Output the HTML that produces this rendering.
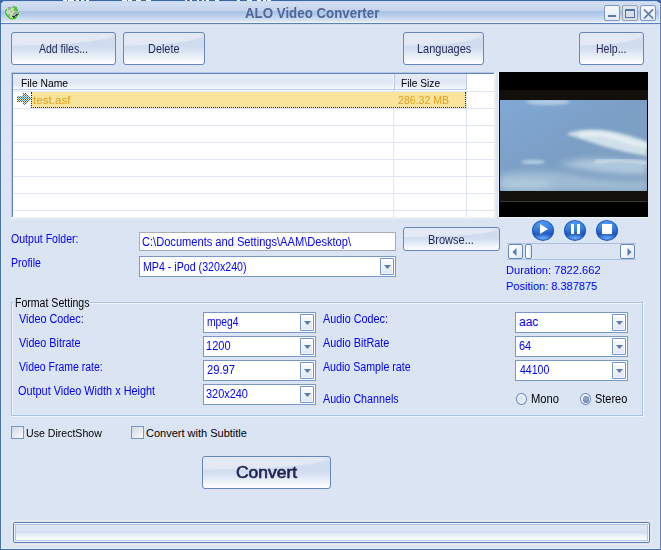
<!DOCTYPE html>
<html><head><meta charset="utf-8">
<style>
*{margin:0;padding:0;box-sizing:border-box}
html,body{width:661px;height:550px;overflow:hidden;background:#dae4f3}
body{position:relative;font-family:"Liberation Sans",sans-serif;font-size:11px;color:#000}
.a{position:absolute}
.t{position:absolute;white-space:pre;line-height:1}
.btn{position:absolute;border:1px solid #6787bb;border-radius:3px;overflow:hidden;
 background:radial-gradient(ellipse 102% 38% at 0% 4%,#e4eaf5 0%,#e2e9f4 93%,rgba(226,233,244,0) 100%),
 linear-gradient(to bottom,#d3def0 0%,#cfdbee 35%,#d3def0 50%,#e3eaf6 68%,#f1f5fb 85%,#fdfeff 100%)}
.btn .gl{display:none}
.combo{position:absolute;background:#fff;border:1px solid #7b97c6}
.combo .ar{position:absolute;right:1px;top:1px;bottom:1px;width:14px;border:1px solid #7191c4;border-radius:1px;
 background:linear-gradient(to bottom,#ffffff 0%,#f0f4fa 40%,#dde6f3 100%);box-shadow:inset 0 0 0 1px rgba(255,255,255,0.7)}
.combo .tri{position:absolute;left:3px;top:6px;width:7px;height:4px;background:#5a79ae;clip-path:polygon(0 0,100% 0,50% 100%)}
.chk{position:absolute;width:13px;height:13px;border:1px solid #7a96c4;background:linear-gradient(135deg,#cfd6e6 0%,#e6eaf3 50%,#fdfdfe 100%)}
</style></head><body>

<div class="a" style="left:0px;top:0px;width:661px;height:1px;background:#3b66a8"></div>
<div class="a" style="left:63px;top:0px;width:4px;height:1px;background:#f4f6fa"></div>
<div class="a" style="left:68px;top:0px;width:6px;height:1px;background:#f4f6fa"></div>
<div class="a" style="left:76px;top:0px;width:3px;height:1px;background:#f4f6fa"></div>
<div class="a" style="left:81px;top:0px;width:3px;height:1px;background:#f4f6fa"></div>
<div class="a" style="left:86px;top:0px;width:3px;height:1px;background:#f4f6fa"></div>
<div class="a" style="left:122px;top:0px;width:5px;height:1px;background:#f4f6fa"></div>
<div class="a" style="left:128px;top:0px;width:4px;height:1px;background:#f4f6fa"></div>
<div class="a" style="left:136px;top:0px;width:5px;height:1px;background:#f4f6fa"></div>
<div class="a" style="left:146px;top:0px;width:5px;height:1px;background:#f4f6fa"></div>
<div class="a" style="left:185px;top:0px;width:2px;height:1px;background:#f4f6fa"></div>
<div class="a" style="left:190px;top:0px;width:2px;height:1px;background:#f4f6fa"></div>
<div class="a" style="left:197px;top:0px;width:2px;height:1px;background:#f4f6fa"></div>
<div class="a" style="left:202px;top:0px;width:2px;height:1px;background:#f4f6fa"></div>
<div class="a" style="left:206px;top:0px;width:3px;height:1px;background:#f4f6fa"></div>
<div class="a" style="left:215px;top:0px;width:4px;height:1px;background:#f4f6fa"></div>
<div class="a" style="left:237px;top:0px;width:3px;height:1px;background:#f4f6fa"></div>
<div class="a" style="left:247px;top:0px;width:5px;height:1px;background:#f4f6fa"></div>
<div class="a" style="left:257px;top:0px;width:4px;height:1px;background:#f4f6fa"></div>
<div class="a" style="left:263px;top:0px;width:3px;height:1px;background:#f4f6fa"></div>
<div class="a" style="left:267px;top:0px;width:4px;height:1px;background:#f4f6fa"></div>
<div class="a" style="left:1px;top:25px;width:1px;height:523px;background:#e6edf8"></div>
<div class="a" style="left:1px;top:1px;width:658px;height:22px;background:linear-gradient(to bottom,#bccfea 0px,#d2def1 1px,#cbd9ef 6px,#c2d3ed 10px,#a9c2e6 10px,#b2c8e9 13px,#c3d4ee 16px,#d3e0f3 19px,#e2eaf7 21px,#eff4fb 21px)"></div>
<div class="a" style="left:0px;top:23px;width:661px;height:1px;background:#5c80b9"></div>
<div class="a" style="left:1px;top:24px;width:658px;height:1px;background:#d0dcef"></div>
<div class="a" style="left:0px;top:0px;width:1px;height:550px;background:#4570ad"></div>
<div class="a" style="left:659px;top:1px;width:1px;height:22px;background:#e2eaf6"></div>
<div class="a" style="left:659px;top:24px;width:1px;height:524px;background:#e2eaf6"></div>
<div class="a" style="left:660px;top:0px;width:1px;height:550px;background:#6383b8"></div>
<div class="a" style="left:657px;top:0px;width:4px;height:2px;background:#3b66a8"></div>
<div class="a" style="left:659px;top:0px;width:2px;height:3px;background:#3b66a8"></div>
<div class="a" style="left:0px;top:0px;width:3px;height:2px;background:#3b66a8"></div>
<div class="a" style="left:0px;top:0px;width:2px;height:3px;background:#3b66a8"></div>
<div class="a" style="left:0px;top:549px;width:661px;height:1px;background:#4570ad"></div>
<div class="a" style="left:1px;top:548px;width:658px;height:1px;background:#e8eef8"></div>
<div class="t" style="left:245.0px;top:6px;color:#4f6799;font-size:14px;font-weight:bold;transform:scaleX(0.9504);transform-origin:0 0">ALO Video Converter</div>
<svg class="a" style="left:4px;top:5px" width="16" height="16" shape-rendering="crispEdges"><rect x="5" y="1" width="1" height="1" fill="#d2d2dc"/><rect x="6" y="1" width="1" height="1" fill="#d2d2dc"/><rect x="7" y="1" width="1" height="1" fill="#d2d2dc"/><rect x="8" y="1" width="1" height="1" fill="#d2d2dc"/><rect x="9" y="1" width="1" height="1" fill="#48c438"/><rect x="10" y="1" width="1" height="1" fill="#48c438"/><rect x="3" y="2" width="1" height="1" fill="#b8ec80"/><rect x="4" y="2" width="1" height="1" fill="#a6a8b6"/><rect x="5" y="2" width="1" height="1" fill="#a6a8b6"/><rect x="6" y="2" width="1" height="1" fill="#a6a8b6"/><rect x="7" y="2" width="1" height="1" fill="#a6a8b6"/><rect x="8" y="2" width="1" height="1" fill="#a6a8b6"/><rect x="9" y="2" width="1" height="1" fill="#a6a8b6"/><rect x="10" y="2" width="1" height="1" fill="#48c438"/><rect x="11" y="2" width="1" height="1" fill="#48c438"/><rect x="12" y="2" width="1" height="1" fill="#48c438"/><rect x="2" y="3" width="1" height="1" fill="#b8ec80"/><rect x="3" y="3" width="1" height="1" fill="#b8ec80"/><rect x="4" y="3" width="1" height="1" fill="#a6a8b6"/><rect x="5" y="3" width="1" height="1" fill="#a6a8b6"/><rect x="6" y="3" width="1" height="1" fill="#a6a8b6"/><rect x="7" y="3" width="1" height="1" fill="#b8ec80"/><rect x="8" y="3" width="1" height="1" fill="#b8ec80"/><rect x="9" y="3" width="1" height="1" fill="#b8ec80"/><rect x="10" y="3" width="1" height="1" fill="#48c438"/><rect x="11" y="3" width="1" height="1" fill="#48c438"/><rect x="12" y="3" width="1" height="1" fill="#48c438"/><rect x="2" y="4" width="1" height="1" fill="#48c438"/><rect x="3" y="4" width="1" height="1" fill="#b8ec80"/><rect x="4" y="4" width="1" height="1" fill="#a6a8b6"/><rect x="5" y="4" width="1" height="1" fill="#a6a8b6"/><rect x="6" y="4" width="1" height="1" fill="#a6a8b6"/><rect x="7" y="4" width="1" height="1" fill="#b8ec80"/><rect x="8" y="4" width="1" height="1" fill="#b8ec80"/><rect x="9" y="4" width="1" height="1" fill="#b8ec80"/><rect x="10" y="4" width="1" height="1" fill="#48c438"/><rect x="11" y="4" width="1" height="1" fill="#48c438"/><rect x="12" y="4" width="1" height="1" fill="#48c438"/><rect x="13" y="4" width="1" height="1" fill="#48c438"/><rect x="1" y="5" width="1" height="1" fill="#48c438"/><rect x="2" y="5" width="1" height="1" fill="#48c438"/><rect x="3" y="5" width="1" height="1" fill="#b8ec80"/><rect x="4" y="5" width="1" height="1" fill="#b8ec80"/><rect x="5" y="5" width="1" height="1" fill="#d2d2dc"/><rect x="6" y="5" width="1" height="1" fill="#d2d2dc"/><rect x="7" y="5" width="1" height="1" fill="#d2d2dc"/><rect x="8" y="5" width="1" height="1" fill="#d2d2dc"/><rect x="9" y="5" width="1" height="1" fill="#a6a8b6"/><rect x="10" y="5" width="1" height="1" fill="#a6a8b6"/><rect x="11" y="5" width="1" height="1" fill="#a6a8b6"/><rect x="12" y="5" width="1" height="1" fill="#48c438"/><rect x="13" y="5" width="1" height="1" fill="#48c438"/><rect x="1" y="6" width="1" height="1" fill="#48c438"/><rect x="2" y="6" width="1" height="1" fill="#b8ec80"/><rect x="3" y="6" width="1" height="1" fill="#b8ec80"/><rect x="4" y="6" width="1" height="1" fill="#d2d2dc"/><rect x="5" y="6" width="1" height="1" fill="#d2d2dc"/><rect x="6" y="6" width="1" height="1" fill="#a6a8b6"/><rect x="7" y="6" width="1" height="1" fill="#a6a8b6"/><rect x="8" y="6" width="1" height="1" fill="#b8ec80"/><rect x="9" y="6" width="1" height="1" fill="#b8ec80"/><rect x="10" y="6" width="1" height="1" fill="#b8ec80"/><rect x="11" y="6" width="1" height="1" fill="#a6a8b6"/><rect x="12" y="6" width="1" height="1" fill="#a6a8b6"/><rect x="13" y="6" width="1" height="1" fill="#a6a8b6"/><rect x="14" y="6" width="1" height="1" fill="#d2d2dc"/><rect x="1" y="7" width="1" height="1" fill="#48c438"/><rect x="2" y="7" width="1" height="1" fill="#b8ec80"/><rect x="3" y="7" width="1" height="1" fill="#d2d2dc"/><rect x="4" y="7" width="1" height="1" fill="#d2d2dc"/><rect x="5" y="7" width="1" height="1" fill="#d2d2dc"/><rect x="6" y="7" width="1" height="1" fill="#d2d2dc"/><rect x="7" y="7" width="1" height="1" fill="#b8ec80"/><rect x="8" y="7" width="1" height="1" fill="#b8ec80"/><rect x="9" y="7" width="1" height="1" fill="#b8ec80"/><rect x="10" y="7" width="1" height="1" fill="#a6a8b6"/><rect x="11" y="7" width="1" height="1" fill="#a6a8b6"/><rect x="12" y="7" width="1" height="1" fill="#a6a8b6"/><rect x="13" y="7" width="1" height="1" fill="#a6a8b6"/><rect x="14" y="7" width="1" height="1" fill="#48c438"/><rect x="1" y="8" width="1" height="1" fill="#48c438"/><rect x="2" y="8" width="1" height="1" fill="#48c438"/><rect x="3" y="8" width="1" height="1" fill="#d2d2dc"/><rect x="4" y="8" width="1" height="1" fill="#d2d2dc"/><rect x="5" y="8" width="1" height="1" fill="#d2d2dc"/><rect x="6" y="8" width="1" height="1" fill="#d2d2dc"/><rect x="7" y="8" width="1" height="1" fill="#b8ec80"/><rect x="8" y="8" width="1" height="1" fill="#b8ec80"/><rect x="9" y="8" width="1" height="1" fill="#a6a8b6"/><rect x="10" y="8" width="1" height="1" fill="#a6a8b6"/><rect x="11" y="8" width="1" height="1" fill="#a6a8b6"/><rect x="12" y="8" width="1" height="1" fill="#a6a8b6"/><rect x="13" y="8" width="1" height="1" fill="#a6a8b6"/><rect x="14" y="8" width="1" height="1" fill="#48c438"/><rect x="2" y="9" width="1" height="1" fill="#48c438"/><rect x="3" y="9" width="1" height="1" fill="#a6a8b6"/><rect x="4" y="9" width="1" height="1" fill="#a6a8b6"/><rect x="5" y="9" width="1" height="1" fill="#a6a8b6"/><rect x="6" y="9" width="1" height="1" fill="#b8ec80"/><rect x="7" y="9" width="1" height="1" fill="#b8ec80"/><rect x="8" y="9" width="1" height="1" fill="#b8ec80"/><rect x="9" y="9" width="1" height="1" fill="#a6a8b6"/><rect x="10" y="9" width="1" height="1" fill="#a6a8b6"/><rect x="11" y="9" width="1" height="1" fill="#a6a8b6"/><rect x="12" y="9" width="1" height="1" fill="#3c3c44"/><rect x="13" y="9" width="1" height="1" fill="#3c3c44"/><rect x="14" y="9" width="1" height="1" fill="#48c438"/><rect x="2" y="10" width="1" height="1" fill="#48c438"/><rect x="3" y="10" width="1" height="1" fill="#48c438"/><rect x="4" y="10" width="1" height="1" fill="#a6a8b6"/><rect x="5" y="10" width="1" height="1" fill="#a6a8b6"/><rect x="6" y="10" width="1" height="1" fill="#b8ec80"/><rect x="7" y="10" width="1" height="1" fill="#b8ec80"/><rect x="8" y="10" width="1" height="1" fill="#a6a8b6"/><rect x="9" y="10" width="1" height="1" fill="#a6a8b6"/><rect x="10" y="10" width="1" height="1" fill="#a6a8b6"/><rect x="11" y="10" width="1" height="1" fill="#3c3c44"/><rect x="12" y="10" width="1" height="1" fill="#3c3c44"/><rect x="13" y="10" width="1" height="1" fill="#48c438"/><rect x="3" y="11" width="1" height="1" fill="#48c438"/><rect x="4" y="11" width="1" height="1" fill="#48c438"/><rect x="5" y="11" width="1" height="1" fill="#a6a8b6"/><rect x="6" y="11" width="1" height="1" fill="#b8ec80"/><rect x="7" y="11" width="1" height="1" fill="#b8ec80"/><rect x="8" y="11" width="1" height="1" fill="#3c3c44"/><rect x="9" y="11" width="1" height="1" fill="#3c3c44"/><rect x="10" y="11" width="1" height="1" fill="#3c3c44"/><rect x="11" y="11" width="1" height="1" fill="#48c438"/><rect x="12" y="11" width="1" height="1" fill="#48c438"/><rect x="4" y="12" width="1" height="1" fill="#48c438"/><rect x="5" y="12" width="1" height="1" fill="#48c438"/><rect x="6" y="12" width="1" height="1" fill="#b8ec80"/><rect x="7" y="12" width="1" height="1" fill="#b8ec80"/><rect x="8" y="12" width="1" height="1" fill="#b8ec80"/><rect x="9" y="12" width="1" height="1" fill="#3c3c44"/><rect x="10" y="12" width="1" height="1" fill="#3c3c44"/><rect x="11" y="12" width="1" height="1" fill="#48c438"/><rect x="12" y="12" width="1" height="1" fill="#48c438"/><rect x="5" y="13" width="1" height="1" fill="#48c438"/><rect x="6" y="13" width="1" height="1" fill="#48c438"/><rect x="7" y="13" width="1" height="1" fill="#48c438"/><rect x="8" y="13" width="1" height="1" fill="#48c438"/><rect x="9" y="13" width="1" height="1" fill="#48c438"/><rect x="10" y="13" width="1" height="1" fill="#48c438"/><rect x="11" y="13" width="1" height="1" fill="#48c438"/><rect x="6" y="14" width="1" height="1" fill="#9edc84"/><rect x="7" y="14" width="1" height="1" fill="#9edc84"/><rect x="8" y="14" width="1" height="1" fill="#9edc84"/><rect x="9" y="14" width="1" height="1" fill="#9edc84"/><rect x="10" y="14" width="1" height="1" fill="#9edc84"/></svg>
<div class="a" style="left:604px;top:5px;width:16px;height:16px;border:1px solid #7d97c4;border-radius:2px;background:linear-gradient(#f5f8fc,#e3ebf6)"><div class="a" style="left:3px;top:9px;width:8px;height:2px;background:#5a78a8"></div></div>
<div class="a" style="left:622px;top:5px;width:16px;height:16px;border:1px solid #9aa2ae;border-radius:2px;background:linear-gradient(#dfe6ef,#d2dbe8)"><div class="a" style="left:2px;top:3px;width:10px;height:9px;border:1px solid #5672a2;border-top-width:2px"></div></div>
<div class="a" style="left:640px;top:5px;width:16px;height:16px;border:1px solid #7d97c4;border-radius:2px;background:linear-gradient(#f5f8fc,#e3ebf6)"><svg class="a" style="left:2px;top:3px" width="11" height="10"><path d="M1 0.5 L10 9.5 M10 0.5 L1 9.5" stroke="#5a78a8" stroke-width="1.7"/></svg></div>
<div class="btn" style="left:11px;top:32px;width:105px;height:33px"><div class="gl"></div></div>
<div class="t" style="left:39.0px;top:43px;color:#25285a;font-size:12px;transform:scaleX(0.8727);transform-origin:0 0">Add files...</div>
<div class="btn" style="left:123px;top:32px;width:82px;height:33px"><div class="gl"></div></div>
<div class="t" style="left:148.09px;top:43px;color:#25285a;font-size:12px;transform:scaleX(0.9091);transform-origin:0 0">Delete</div>
<div class="btn" style="left:403px;top:32px;width:81px;height:33px"><div class="gl"></div></div>
<div class="t" style="left:417.09px;top:43px;color:#25285a;font-size:12px;transform:scaleX(0.9138);transform-origin:0 0">Languages</div>
<div class="btn" style="left:579px;top:32px;width:65px;height:33px"><div class="gl"></div></div>
<div class="t" style="left:596.12px;top:43px;color:#25285a;font-size:12px;transform:scaleX(0.8788);transform-origin:0 0">Help...</div>
<div class="a" style="left:11px;top:72px;width:484px;height:146px;background:#fff"></div>
<div class="a" style="left:11px;top:72px;width:484px;height:1px;background:#b3c8e8"></div>
<div class="a" style="left:11px;top:72px;width:1px;height:146px;background:#b3c8e8"></div>
<div class="a" style="left:12px;top:73px;width:482px;height:1px;background:#6383b8"></div>
<div class="a" style="left:12px;top:73px;width:1px;height:144px;background:#6383b8"></div>
<div class="a" style="left:494px;top:72px;width:1px;height:146px;background:#efefeb"></div>
<div class="a" style="left:11px;top:217px;width:484px;height:1px;background:#efefeb"></div>
<div class="a" style="left:495px;top:72px;width:1px;height:147px;background:#e6edf7"></div>
<div class="a" style="left:11px;top:218px;width:485px;height:1px;background:#e6edf7"></div>
<div class="a" style="left:13px;top:74px;width:380px;height:15px;background:linear-gradient(#e5ecf7 0%,#e2e9f5 40%,#dde6f3 55%,#e8eef8 78%,#f6f9fd 100%)"></div>
<div class="a" style="left:395px;top:74px;width:71px;height:15px;background:linear-gradient(#e5ecf7 0%,#e2e9f5 40%,#dde6f3 55%,#e8eef8 78%,#f6f9fd 100%)"></div>
<div class="a" style="left:393px;top:74px;width:1px;height:15px;background:#fbfcfe"></div>
<div class="a" style="left:394px;top:74px;width:1px;height:16px;background:#b9c9e1"></div>
<div class="a" style="left:466px;top:74px;width:1px;height:16px;background:#b9c9e1"></div>
<div class="a" style="left:13px;top:89px;width:454px;height:1px;background:#bfcde3"></div>
<div class="t" style="left:21.06px;top:78px;color:#000;font-size:11px;transform:scaleX(0.9388);transform-origin:0 0">File Name</div>
<div class="t" style="left:401.07px;top:78px;color:#000;font-size:11px;transform:scaleX(0.9268);transform-origin:0 0">File Size</div>
<div class="a" style="left:13px;top:91px;width:481px;height:1px;background:#dde6f2"></div>
<div class="a" style="left:13px;top:108px;width:481px;height:1px;background:#dde6f2"></div>
<div class="a" style="left:13px;top:125px;width:481px;height:1px;background:#dde6f2"></div>
<div class="a" style="left:13px;top:142px;width:481px;height:1px;background:#dde6f2"></div>
<div class="a" style="left:13px;top:159px;width:481px;height:1px;background:#dde6f2"></div>
<div class="a" style="left:13px;top:176px;width:481px;height:1px;background:#dde6f2"></div>
<div class="a" style="left:13px;top:193px;width:481px;height:1px;background:#dde6f2"></div>
<div class="a" style="left:13px;top:210px;width:481px;height:1px;background:#dde6f2"></div>
<div class="a" style="left:393px;top:90px;width:1px;height:127px;background:#dde6f2"></div>
<div class="a" style="left:466px;top:90px;width:1px;height:127px;background:#dde6f2"></div>
<div class="a" style="left:31px;top:92px;width:435px;height:16px;background:#f8e49b;border:1px dotted #1a2a70;border-top:none"></div>
<div class="t" style="left:33.0px;top:95px;color:#e0a01c;font-size:11px;transform:scaleX(1.0556);transform-origin:0 0">test.asf</div>
<div class="t" style="left:398.04px;top:95px;color:#e0a01c;font-size:11px;transform:scaleX(0.9615);transform-origin:0 0">286.32 MB</div>
<svg class="a" style="left:17px;top:93px" width="14" height="12" viewBox="0 0 14 12" shape-rendering="crispEdges">
<defs><pattern id="dth" width="2" height="2" patternUnits="userSpaceOnUse"><rect width="2" height="2" fill="#f6e6a8"/><rect width="1" height="1" fill="#2458c0"/><rect x="1" y="1" width="1" height="1" fill="#4c90e0"/></pattern></defs>
<path d="M0 3 H6 V0 H8 L14 6 L8 12 H6 V9 H0 Z" fill="url(#dth)"/>
</svg>
<div class="a" style="left:498px;top:72px;width:1px;height:146px;background:#eef4fc"></div>
<div class="a" style="left:498px;top:217px;width:151px;height:1px;background:#eef4fc"></div>
<div class="a" style="left:499px;top:72px;width:149px;height:145px;background:#000"></div>
<div class="a" style="left:499px;top:90px;width:149px;height:10px;background:#13100b"></div>
<svg class="a" style="left:500px;top:100px" width="147" height="91" viewBox="0 0 147 91">
<defs>
<linearGradient id="sky" x1="0" y1="0" x2="1" y2="1">
<stop offset="0" stop-color="#80a9d6"/><stop offset="0.45" stop-color="#7c9fc6"/><stop offset="1" stop-color="#7f9fbe"/></linearGradient>
<filter id="bl" x="-50%" y="-50%" width="200%" height="200%"><feGaussianBlur stdDeviation="3"/></filter>
<filter id="bl2" x="-50%" y="-50%" width="200%" height="200%"><feGaussianBlur stdDeviation="1.6"/></filter>
</defs>
<rect width="147" height="91" fill="url(#sky)"/>
<ellipse cx="48" cy="2" rx="22" ry="3" fill="#c4d8ea" filter="url(#bl2)" opacity="0.75"/>
<path d="M66 34 Q84 27 110 31 Q135 36 147 42 L147 56 Q126 53 106 47 Q84 40 66 34 Z" fill="#cfe0ea" filter="url(#bl2)"/>
<path d="M80 35 Q100 32 118 38 Q132 43 147 46" stroke="#e6eff3" stroke-width="4" fill="none" filter="url(#bl2)"/>
<ellipse cx="33" cy="62" rx="12" ry="2" fill="#c0d6e6" filter="url(#bl2)" opacity="0.9"/>
<path d="M58 64 Q88 57 118 60 Q134 62 147 60 L147 74 Q108 76 58 64 Z" fill="#b6cde0" filter="url(#bl)" opacity="0.9"/>
<path d="M95 62 Q118 59 147 63" stroke="#d0e0ea" stroke-width="3" fill="none" filter="url(#bl2)"/>
<path d="M0 74 Q30 68 70 74 Q110 82 147 80 L147 91 L0 91 Z" fill="#a4c0d6" filter="url(#bl)" opacity="0.85"/>
<ellipse cx="25" cy="84" rx="28" ry="5" fill="#b8d0e0" filter="url(#bl)" opacity="0.7"/>
</svg>
<div class="a" style="left:499px;top:191px;width:149px;height:10px;background:#13100b"></div>
<div class="a" style="left:500px;top:201px;width:147px;height:1px;background:#3c3a34"></div>
<div class="a" style="left:532px;top:220px;width:22px;height:21px;border-radius:50%;background:radial-gradient(ellipse 55% 22% at 50% 86%,rgba(110,175,250,0.95) 0%,rgba(110,175,250,0) 100%),radial-gradient(ellipse 70% 50% at 45% 20%,rgba(90,160,245,0.8) 0%,rgba(90,160,245,0) 100%),linear-gradient(to bottom,#3580e0 0%,#2a6cd4 40%,#1b54bc 72%,#1d58c2 100%);box-shadow:inset 0 0 0 1px rgba(20,70,170,0.6)"></div>
<div class="a" style="left:564px;top:220px;width:22px;height:21px;border-radius:50%;background:radial-gradient(ellipse 55% 22% at 50% 86%,rgba(110,175,250,0.95) 0%,rgba(110,175,250,0) 100%),radial-gradient(ellipse 70% 50% at 45% 20%,rgba(90,160,245,0.8) 0%,rgba(90,160,245,0) 100%),linear-gradient(to bottom,#3580e0 0%,#2a6cd4 40%,#1b54bc 72%,#1d58c2 100%);box-shadow:inset 0 0 0 1px rgba(20,70,170,0.6)"></div>
<div class="a" style="left:596px;top:220px;width:22px;height:21px;border-radius:50%;background:radial-gradient(ellipse 55% 22% at 50% 86%,rgba(110,175,250,0.95) 0%,rgba(110,175,250,0) 100%),radial-gradient(ellipse 70% 50% at 45% 20%,rgba(90,160,245,0.8) 0%,rgba(90,160,245,0) 100%),linear-gradient(to bottom,#3580e0 0%,#2a6cd4 40%,#1b54bc 72%,#1d58c2 100%);box-shadow:inset 0 0 0 1px rgba(20,70,170,0.6)"></div>
<svg class="a" style="left:540px;top:224px" width="9" height="10"><path d="M0 0 L8 5 L0 10 Z" fill="#fff"/></svg>
<div class="a" style="left:571px;top:224px;width:3px;height:10px;background:#fff"></div>
<div class="a" style="left:577px;top:224px;width:3px;height:10px;background:#fff"></div>
<div class="a" style="left:602px;top:224px;width:10px;height:10px;background:#fff"></div>
<div class="a" style="left:507px;top:243px;width:129px;height:1px;background:#a9c0e3"></div>
<div class="a" style="left:507px;top:259px;width:129px;height:1px;background:#a9c0e3"></div>
<div class="a" style="left:508px;top:244px;width:15px;height:15px;border:1px solid #6787ba;border-radius:2px;background:linear-gradient(135deg,#ffffff 0%,#f2f5fa 50%,#dfe7f3 100%)"></div>
<svg class="a" style="left:512px;top:248px" width="5" height="8"><path d="M4.5 0 L0.5 4 L4.5 8 Z" fill="#5b7bb1"/></svg>
<div class="a" style="left:525px;top:244px;width:7px;height:15px;border:1px solid #6787ba;border-radius:2px;background:linear-gradient(to right,#ffffff 0%,#f4f7fb 50%,#dde6f3 100%)"></div>
<div class="a" style="left:620px;top:244px;width:15px;height:15px;border:1px solid #6787ba;border-radius:2px;background:linear-gradient(135deg,#ffffff 0%,#f2f5fa 50%,#dfe7f3 100%)"></div>
<svg class="a" style="left:627px;top:248px" width="5" height="8"><path d="M0.5 0 L4.5 4 L0.5 8 Z" fill="#5b7bb1"/></svg>
<div class="t" style="left:505.99px;top:265px;color:#0000ff;font-size:11px;transform:scaleX(1.0109);transform-origin:0 0">Duration: 7822.662</div>
<div class="t" style="left:506.0px;top:281px;color:#0000ff;font-size:11px">Position: 8.387875</div>
<div class="t" style="left:11.12px;top:233px;color:#0000ff;font-size:12px;transform:scaleX(0.88);transform-origin:0 0">Output Folder:</div>
<div class="t" style="left:11.12px;top:257px;color:#0000ff;font-size:12px;transform:scaleX(0.8788);transform-origin:0 0">Profile</div>
<div class="a" style="left:139px;top:232px;width:257px;height:19px;border:1px solid #a6adb6;background:#fff"></div>
<div class="t" style="left:142.08px;top:236px;color:#0000ff;font-size:12px;transform:scaleX(0.9244);transform-origin:0 0">C:\Documents and Settings\AAM\Desktop\</div>
<div class="combo" style="left:139px;top:256px;width:257px;height:21px"><div class="ar"><div class="tri"></div></div></div>
<div class="t" style="left:143.11px;top:261px;color:#0000ff;font-size:12px;transform:scaleX(0.887);transform-origin:0 0">MP4 - iPod (320x240)</div>
<div class="btn" style="left:403px;top:227px;width:97px;height:24px"><div class="gl"></div></div>
<div class="t" style="left:428.08px;top:234px;color:#25285a;font-size:12px;transform:scaleX(0.9167);transform-origin:0 0">Browse...</div>
<div class="a" style="left:11px;top:302px;width:632px;height:114px;border:1px solid #a9c1e4"></div>
<div class="a" style="left:12px;top:303px;width:630px;height:112px;border:1px solid #f2f6fb;border-right:none;border-bottom:none"></div>
<div class="a" style="left:643px;top:302px;width:1px;height:115px;background:#f2f6fb"></div>
<div class="a" style="left:11px;top:416px;width:633px;height:1px;background:#f2f6fb"></div>
<div class="a" style="left:14px;top:297px;width:76px;height:11px;background:#dae4f3"></div>
<div class="t" style="left:15.12px;top:297px;color:#000;font-size:12px;transform:scaleX(0.8795);transform-origin:0 0">Format Settings</div>
<div class="t" style="left:19.0px;top:313px;color:#0000ff;font-size:12px;transform:scaleX(0.9014);transform-origin:0 0">Video Codec:</div>
<div class="t" style="left:19.0px;top:337px;color:#0000ff;font-size:12px;transform:scaleX(0.8971);transform-origin:0 0">Video Bitrate</div>
<div class="t" style="left:19.0px;top:361px;color:#0000ff;font-size:12px;transform:scaleX(0.8737);transform-origin:0 0">Video Frame rate:</div>
<div class="t" style="left:18.09px;top:385px;color:#0000ff;font-size:12px;transform:scaleX(0.9067);transform-origin:0 0">Output Video Width x Height</div>
<div class="combo" style="left:203px;top:312px;width:113px;height:21px"><div class="ar"><div class="tri"></div></div></div>
<div class="t" style="left:207.14px;top:316px;color:#0000ff;font-size:12px;transform:scaleX(0.8611);transform-origin:0 0">mpeg4</div>
<div class="combo" style="left:203px;top:336px;width:113px;height:21px"><div class="ar"><div class="tri"></div></div></div>
<div class="t" style="left:206.08px;top:340px;color:#0000ff;font-size:12px;transform:scaleX(0.92);transform-origin:0 0">1200</div>
<div class="combo" style="left:203px;top:360px;width:113px;height:21px"><div class="ar"><div class="tri"></div></div></div>
<div class="t" style="left:207.07px;top:364px;color:#0000ff;font-size:12px;transform:scaleX(0.931);transform-origin:0 0">29.97</div>
<div class="combo" style="left:203px;top:384px;width:113px;height:21px"><div class="ar"><div class="tri"></div></div></div>
<div class="t" style="left:206.09px;top:388px;color:#0000ff;font-size:12px;transform:scaleX(0.9111);transform-origin:0 0">320x240</div>
<div class="t" style="left:323.0px;top:313px;color:#0000ff;font-size:12px;transform:scaleX(0.9014);transform-origin:0 0">Audio Codec:</div>
<div class="t" style="left:323.0px;top:337px;color:#0000ff;font-size:12px;transform:scaleX(0.9041);transform-origin:0 0">Audio BitRate</div>
<div class="t" style="left:323.0px;top:361px;color:#0000ff;font-size:12px;transform:scaleX(0.8878);transform-origin:0 0">Audio Sample rate</div>
<div class="t" style="left:323.0px;top:393px;color:#0000ff;font-size:12px;transform:scaleX(0.8929);transform-origin:0 0">Audio Channels</div>
<div class="combo" style="left:515px;top:312px;width:113px;height:21px"><div class="ar"><div class="tri"></div></div></div>
<div class="t" style="left:519.0px;top:316px;color:#0000ff;font-size:12px">aac</div>
<div class="combo" style="left:515px;top:336px;width:113px;height:21px"><div class="ar"><div class="tri"></div></div></div>
<div class="t" style="left:519.08px;top:340px;color:#0000ff;font-size:12px;transform:scaleX(0.9167);transform-origin:0 0">64</div>
<div class="combo" style="left:515px;top:360px;width:113px;height:21px"><div class="ar"><div class="tri"></div></div></div>
<div class="t" style="left:520.0px;top:364px;color:#0000ff;font-size:12px;transform:scaleX(0.8788);transform-origin:0 0">44100</div>
<div class="a" style="left:516px;top:393px;width:11px;height:12px;border-radius:50%;border:1px solid #6787ba;background:radial-gradient(ellipse at 50% 50%,#dce5f3 0%,#e2eaf6 45%,#f6f8fc 60%,#ffffff 100%)"></div>
<div class="t" style="left:531.07px;top:393px;color:#000;font-size:12px;transform:scaleX(0.931);transform-origin:0 0">Mono</div>
<div class="a" style="left:580px;top:393px;width:11px;height:12px;border-radius:50%;border:1px solid #6787ba;background:radial-gradient(ellipse at 50% 50%,#e2eaf6 0%,#f6f8fc 60%,#ffffff 100%)"><div class="a" style="left:1.5px;top:2px;width:6.5px;height:6.5px;border-radius:50%;background:radial-gradient(circle at 45% 40%,#9ab2d8 0%,#6f8fc0 50%,#5b7bb0 100%)"></div></div>
<div class="t" style="left:595.09px;top:393px;color:#000;font-size:12px;transform:scaleX(0.9118);transform-origin:0 0">Stereo</div>
<div class="chk" style="left:11px;top:426px;width:13px;height:13px;"></div>
<div class="t" style="left:26.04px;top:428px;color:#000;font-size:11px;transform:scaleX(0.9615);transform-origin:0 0">Use DirectShow</div>
<div class="chk" style="left:131px;top:426px;width:13px;height:13px;"></div>
<div class="t" style="left:146.0px;top:428px;color:#000;font-size:11px">Convert with Subtitle</div>
<div class="btn" style="left:202px;top:456px;width:129px;height:33px"><div class="gl"></div></div>
<div class="t" style="left:236.0px;top:465px;color:#1f2250;font-size:16px;font-weight:normal;-webkit-text-stroke:0.6px currentColor;transform:scaleX(1.0893);transform-origin:0 0">Convert</div>
<div class="a" style="left:11px;top:520px;width:641px;height:25px;border:1px solid #ecebe3"></div>
<div class="a" style="left:13px;top:522px;width:637px;height:21px;border:1px solid #5b7bb5;border-radius:2px"></div>
<div class="a" style="left:14px;top:523px;width:635px;height:19px;border:1px solid #eef2fa;border-radius:1px"></div>
<div class="a" style="left:15px;top:524px;width:633px;height:17px;border:1px solid #b3c6e4;background:linear-gradient(to bottom,#dde6f4 0%,#d9e3f3 40%,#cfdbef 46%,#dfe8f5 60%,#f3f6fb 80%,#ffffff 100%)"></div>
</body></html>
